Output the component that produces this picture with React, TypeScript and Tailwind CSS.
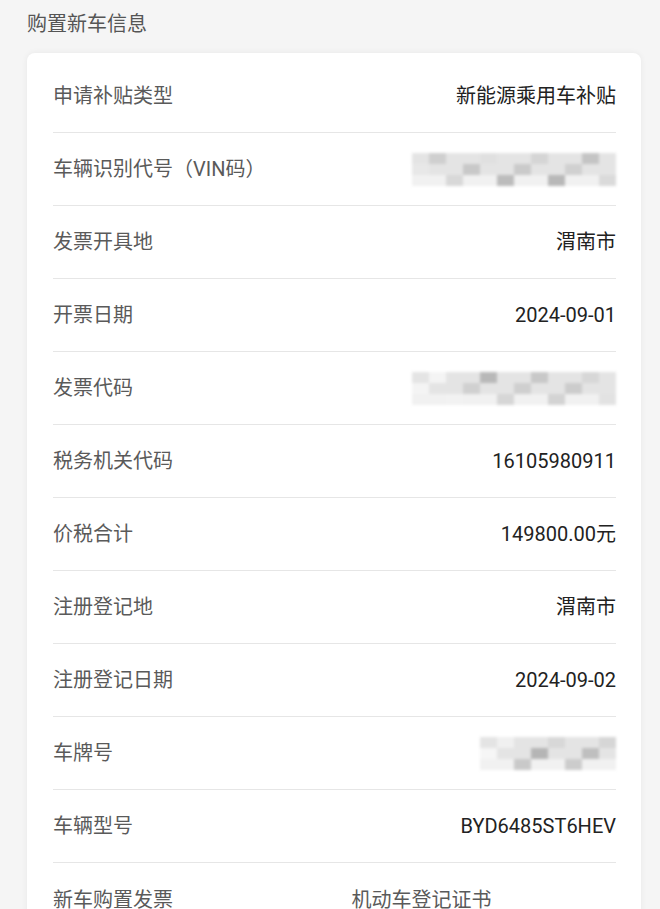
import React from "react";

const font = { fontFamily: 'Roboto, "Noto Sans CJK SC", sans-serif' };

function Mosaic({ cells }: { cells: string[] }) {
  return (
    <div className="flex flex-col blur-[1.5px]">
      {[0, 1, 2].map((r) => (
        <div key={r} className="flex">
          {cells.map((c, i) => (
            <div
              key={i}
              className="h-[11px] w-[17px]"
              style={{ backgroundColor: (r + i) % 3 === 1 ? c : r === 2 ? "#f1f1f1" : "#e4e4e4" }}
            />
          ))}
        </div>
      ))}
    </div>
  );
}

type Row = { label: string; value?: string; mosaic?: string[] };

const rows: Row[] = [
  { label: "申请补贴类型", value: "新能源乘用车补贴" },
  { label: "车辆识别代号（VIN码）", mosaic: ["#e8e8e8", "#cfcfcf", "#d8d8d8", "#c8c8c8", "#e0e0e0", "#bcbcbc", "#cacaca", "#d5d5d5", "#b8b8b8", "#d0d0d0", "#c4c4c4", "#dadada"] },
  { label: "发票开具地", value: "渭南市" },
  { label: "开票日期", value: "2024-09-01" },
  { label: "发票代码", mosaic: ["#f4f4f4", "#f4f4f4", "#f2f2f2", "#d0d0d0", "#b8b8b8", "#d6d6d6", "#cfcfcf", "#c8c8c8", "#d3d3d3", "#cccccc", "#d7d7d7", "#e2e2e2"] },
  { label: "税务机关代码", value: "16105980911" },
  { label: "价税合计", value: "149800.00元" },
  { label: "注册登记地", value: "渭南市" },
  { label: "注册登记日期", value: "2024-09-02" },
  { label: "车牌号", mosaic: ["#f6f6f6", "#f0f0f0", "#c9c9c9", "#b5b5b5", "#d8d8d8", "#cccccc", "#bfbfbf", "#d6d6d6"] },
  { label: "车辆型号", value: "BYD6485ST6HEV" },
];

export default function App() {
  return (
    <div className="min-h-[909px] w-[660px] overflow-hidden bg-[#f5f5f5]" style={font}>
      <div className="px-[27px] pt-[10px] text-[20px] leading-[28px] text-[#555]">购置新车信息</div>
      <div className="ml-[27px] mr-[19px] mt-[15px] rounded-[8px] bg-white pl-[26px] pr-[25px] pt-[7px] shadow-[0_0_6px_rgba(0,0,0,0.06)]">
        {rows.map((r, i) => (
          <div
            key={i}
            className="flex h-[73px] items-center justify-between border-b border-[#e6e6e6] text-[20px]"
          >
            <span className="text-[#5a5a5a]">{r.label}</span>
            {r.value ? (
              <span className="text-[#222]">{r.value}</span>
            ) : (
              <Mosaic cells={r.mosaic!} />
            )}
          </div>
        ))}
        <div className="grid grid-cols-2 pb-[20px] pt-[23px] text-[20px] leading-[28px] text-[#5a5a5a]">
          <span>新车购置发票</span>
          <span className="pl-[17px]">机动车登记证书</span>
        </div>
      </div>
    </div>
  );
}
